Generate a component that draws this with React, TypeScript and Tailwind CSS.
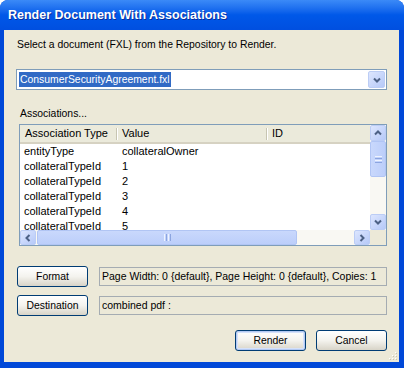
import { ReactNode } from "react";

const rows: [string, string][] = [
  ["entityType", "collateralOwner"],
  ["collateralTypeId", "1"],
  ["collateralTypeId", "2"],
  ["collateralTypeId", "3"],
  ["collateralTypeId", "4"],
  ["collateralTypeId", "5"],
];

const Chevron = ({ dir }: { dir: "up" | "down" | "left" | "right" }) => {
  const d = {
    up: "M2 6.5 L5 3.5 L8 6.5",
    down: "M2 3.5 L5 6.5 L8 3.5",
    left: "M6.5 2 L3.5 5 L6.5 8",
    right: "M3.5 2 L6.5 5 L3.5 8",
  }[dir];
  return (
    <svg width="10" height="10" viewBox="0 0 10 10">
      <path d={d} fill="none" stroke="#4d6185" strokeWidth="2" />
    </svg>
  );
};

const ScrollBtn = ({ children, className = "" }: { children: ReactNode; className?: string }) => (
  <div
    className={`flex items-center justify-center rounded-[2px] border border-[#bccdf5] bg-gradient-to-br from-[#dde6fe] to-[#b6c9f8] ${className}`}
  >
    {children}
  </div>
);

const XpButton = ({ label, isDefault = false }: { label: string; isDefault?: boolean }) => (
  <button
    className={`flex h-[21px] w-[71px] items-center justify-center rounded-[3px] border border-[#003c74] bg-gradient-to-b from-[#ffffff] via-[#f4f3ee] to-[#d8d4c8] text-[10.4px] text-black ${
      isDefault ? "shadow-[inset_0_0_0_1px_#b3c9f3,inset_0_0_0_2px_#d5e1f9]" : ""
    }`}
  >
    {label}
  </button>
);

export default function App() {
  return (
    <div className="h-[368px] w-[404px] bg-white font-['Liberation_Sans',Arial,sans-serif] text-black">
      <div className="flex h-full flex-col overflow-hidden rounded-t-[8px] bg-[#0048d8]">
        {/* Title bar */}
        <div className="flex h-[30px] shrink-0 items-center bg-gradient-to-b from-[#3b8af7] via-[#0058e8] to-[#004fe0] px-[8px]">
          <span className="text-[12.5px] font-bold text-white [text-shadow:1px_1px_0_#0a2e9a]">
            Render Document With Associations
          </span>
        </div>

        {/* Body */}
        <div className="mb-[6px] ml-[4px] mr-[5px] flex flex-1 flex-col bg-[#ece9d8] px-[12px]">
          <div className="mt-[8px] pl-[1px] text-[10.4px] leading-[14px]">
            Select a document (FXL) from the Repository to Render.
          </div>

          {/* Combo */}
          <div className="mt-[17px] flex h-[21px] items-center border border-[#7f9db9] bg-white pl-[2px] pr-[1px]">
            <span className="flex h-[15px] items-center bg-[#316ac5] px-[1px] text-[10.4px] text-white">
              ConsumerSecurityAgreement.fxl
            </span>
            <div className="flex-1" />
            <ScrollBtn className="h-[17px] w-[17px]">
              <Chevron dir="down" />
            </ScrollBtn>
          </div>

          <div className="mt-[17px] pl-[4px] text-[10.4px] leading-[14px]">Associations...</div>

          {/* List view */}
          <div className="ml-[3px] mt-[3px] flex h-[122px] flex-col border border-[#7f9db9] bg-white">
            <div className="flex h-[105px]">
              <div className="flex flex-1 flex-col overflow-hidden">
                <div className="flex h-[19px] shrink-0 items-center border-b-2 border-[#d6d2c2] bg-[#ebeadb] text-[11px]">
                  <div className="flex h-full w-[98px] items-center justify-between pl-[5px]">
                    <span>Association Type</span>
                    <span className="h-[12px] w-[2px] border-l border-r border-l-[#c7c5b2] border-r-white" />
                  </div>
                  <div className="flex h-full w-[150px] items-center justify-between pl-[4px]">
                    <span>Value</span>
                    <span className="h-[12px] w-[2px] border-l border-r border-l-[#c7c5b2] border-r-white" />
                  </div>
                  <div className="flex h-full flex-1 items-center pl-[4px]">
                    <span>ID</span>
                  </div>
                </div>
                {rows.map(([t, v], i) => (
                  <div key={i} className="flex h-[15px] shrink-0 items-center text-[11px]">
                    <div className="w-[98px] pl-[4px]">{t}</div>
                    <div className="pl-[4px]">{v}</div>
                  </div>
                ))}
              </div>
              {/* Vertical scrollbar */}
              <div className="flex w-[16px] flex-col bg-[#f9f8f3]">
                <ScrollBtn className="h-[16px] w-[16px]">
                  <Chevron dir="up" />
                </ScrollBtn>
                <div className="flex h-[36px] w-[16px] items-center justify-center rounded-[2px] border border-[#b1c5f4] bg-gradient-to-r from-[#c9d8fc] to-[#bccefa]">
                  <div className="flex flex-col gap-[1px]">
                    <span className="h-[1px] w-[7px] bg-[#eef3fe]" />
                    <span className="h-[1px] w-[7px] bg-[#8ca5e0]" />
                    <span className="h-[1px] w-[7px] bg-[#eef3fe]" />
                    <span className="h-[1px] w-[7px] bg-[#8ca5e0]" />
                  </div>
                </div>
                <div className="flex-1" />
                <ScrollBtn className="h-[16px] w-[16px]">
                  <Chevron dir="down" />
                </ScrollBtn>
              </div>
            </div>
            {/* Horizontal scrollbar */}
            <div className="flex h-[15px] bg-[#f9f8f3]">
              <ScrollBtn className="h-[15px] w-[16px]">
                <Chevron dir="left" />
              </ScrollBtn>
              <div className="ml-[1px] flex h-[15px] w-[260px] items-center justify-center rounded-[2px] border border-[#b1c5f4] bg-gradient-to-b from-[#c9d8fc] to-[#bccefa]">
                <div className="flex gap-[1px]">
                  <span className="h-[7px] w-[1px] bg-[#eef3fe]" />
                  <span className="h-[7px] w-[1px] bg-[#8ca5e0]" />
                  <span className="h-[7px] w-[1px] bg-[#eef3fe]" />
                  <span className="h-[7px] w-[1px] bg-[#8ca5e0]" />
                </div>
              </div>
              <div className="flex-1" />
              <ScrollBtn className="h-[15px] w-[16px]">
                <Chevron dir="right" />
              </ScrollBtn>
              <div className="w-[16px] bg-[#ece9d8]" />
            </div>
          </div>

          {/* Format */}
          <div className="mt-[20px] flex items-center gap-[11px] pl-[1px]">
            <XpButton label="Format" />
            <div className="flex h-[19px] flex-1 items-center border border-[#a5acb2] bg-[#ece9d8] pl-[2px] text-[10.5px]">
              Page Width: 0 {"{default}"}, Page Height: 0 {"{default}"}, Copies: 1
            </div>
          </div>

          {/* Destination */}
          <div className="mt-[8px] flex items-center gap-[11px] pl-[1px]">
            <XpButton label="Destination" />
            <div className="flex h-[19px] flex-1 items-center border border-[#a5acb2] bg-[#ece9d8] pl-[2px] text-[10.5px]">
              combined pdf :
            </div>
          </div>

          {/* Actions */}
          <div className="mt-[14px] flex items-start justify-end gap-[10px]">
            <XpButton label="Render" isDefault />
            <XpButton label="Cancel" />
          </div>

          {/* Resize grip */}
          <div className="mr-[-11px] mt-auto flex justify-end pb-[1px]">
            <svg width="10" height="10" viewBox="0 0 10 10">
              {[
                [8, 2], [8, 5], [5, 5], [8, 8], [5, 8], [2, 8],
              ].map(([x, y], i) => (
                <g key={i}>
                  <rect x={x} y={y} width="1" height="1" fill="#c5c2b2" />
                  <rect x={x - 1} y={y - 1} width="1" height="1" fill="#ffffff" />
                </g>
              ))}
            </svg>
          </div>
        </div>
      </div>
    </div>
  );
}
